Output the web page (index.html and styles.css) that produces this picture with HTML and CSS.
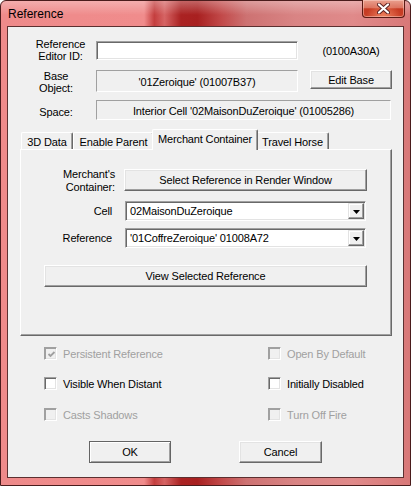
FILE: index.html
```html
<!DOCTYPE html>
<html>
<head>
<meta charset="utf-8">
<title>Reference</title>
<link rel="stylesheet" href="styles.css">
</head>
<body>
<div class="window">
  <div class="titlebar">
    <span class="title">Reference</span>
    <div class="close">
      <svg width="13" height="11" viewBox="0 0 13 11"><path d="M2 1.5 L11 9.5 M11 1.5 L2 9.5" stroke="#5a2020" stroke-width="4" stroke-linecap="round"/><path d="M2 1.5 L11 9.5 M11 1.5 L2 9.5" stroke="#ffffff" stroke-width="2.2" stroke-linecap="round"/></svg>
    </div>
  </div>
  <div class="client">
    <div class="row row1">
      <div class="lbl">Reference<br>Editor ID:</div>
      <div class="edit"></div>
      <div class="third">(0100A30A)</div>
    </div>
    <div class="row row2">
      <div class="lbl lbl-b">Base<br>Object:</div>
      <div class="static">'01Zeroique' (01007B37)</div>
      <div class="btn btn-edit">Edit Base</div>
    </div>
    <div class="row row3">
      <div class="lbl lbl-b">Space:</div>
      <div class="static static-wide">Interior Cell '02MaisonDuZeroique' (01005286)</div>
    </div>

    <div class="tabs">
      <div class="tab t1">3D Data</div>
      <div class="tab t2">Enable Parent</div>
      <div class="tab t3 sel">Merchant Container</div>
      <div class="tab t4">Travel Horse</div>
    </div>
    <div class="panel">
      <div class="prow prow-m">
        <div class="plbl plbl-m">Merchant's<br>Container:</div>
        <div class="btn btn-select">Select Reference in Render Window</div>
      </div>
      <div class="prow prow-c">
        <div class="plbl">Cell</div>
        <div class="combo"><span class="ctext">02MaisonDuZeroique</span><span class="arrow"><svg width="7" height="4" viewBox="0 0 7 4"><path d="M0 0 H7 L3.5 4 Z" fill="#000"/></svg></span></div>
      </div>
      <div class="prow prow-r">
        <div class="plbl">Reference</div>
        <div class="combo"><span class="ctext">'01CoffreZeroique' 01008A72</span><span class="arrow"><svg width="7" height="4" viewBox="0 0 7 4"><path d="M0 0 H7 L3.5 4 Z" fill="#000"/></svg></span></div>
      </div>
      <div class="btn btn-view">View Selected Reference</div>
    </div>

    <div class="checks">
      <label class="chk dis"><span class="box"><svg width="9" height="9" viewBox="0 0 9 9"><path d="M1.5 4 L3.5 6 L7.5 2" fill="none" stroke="#a0a0a0" stroke-width="1.8"/></svg></span>Persistent Reference</label>
      <label class="chk dis"><span class="box"></span>Open By Default</label>
      <label class="chk"><span class="box"></span>Visible When Distant</label>
      <label class="chk"><span class="box"></span>Initially Disabled</label>
      <label class="chk dis"><span class="box"></span>Casts Shadows</label>
      <label class="chk dis"><span class="box"></span>Turn Off Fire</label>
    </div>

    <div class="actions">
      <div class="btn btn-ok">OK</div>
      <div class="btn btn-cancel">Cancel</div>
    </div>
  </div>
</div>
</body>
</html>
```
FILE: styles.css
```css
html, body {
  margin: 0;
  padding: 0;
  background: #ffffff;
}
body {
  font-family: "Liberation Sans", Arial, sans-serif;
  font-size: 11px;
  letter-spacing: -0.15px;
  color: #000;
}
.window {
  box-sizing: border-box;
  width: 411px;
  height: 486px;
  border: 1px solid #4a1c1c;
  border-radius: 6px 6px 0 0;
  padding: 0 6px 7px 6px;
  display: flex;
  flex-direction: column;
  background:
    linear-gradient(180deg, rgba(255,255,255,0.3) 0, rgba(255,255,255,0) 14px),
    linear-gradient(90deg, #ee8a8a 0, #f08c8c 35%, #c43e3e 37.5%, #d66464 40%, #aa2222 44%, #a82020 48%, #c24a4a 54%, #cd7272 60%, #d98484 72%, #e08a8a 86%, #d87878 100%);
}
.titlebar {
  height: 25px;
  display: flex;
  justify-content: space-between;
  align-items: center;
}
.title {
  font-size: 12px;
  letter-spacing: 0;
  padding-left: 1px;
  color: #000;
}
.close {
  align-self: flex-start;
  margin-top: -1px;
  margin-right: -1px;
  width: 43px;
  height: 18px;
  box-sizing: border-box;
  border: 1px solid #5a1a14;
  border-top: none;
  border-radius: 0 0 4px 4px;
  background:
    radial-gradient(ellipse at 50% 100%, rgba(255,160,120,0.7) 0, rgba(255,120,90,0) 60%),
    linear-gradient(180deg, #eaa08e 0, #dc7460 45%, #c63a22 52%, #c84028 100%);
  box-shadow: inset 0 0 0 1px rgba(255,220,210,0.45);
  display: flex;
  align-items: center;
  justify-content: center;
}
.client {
  box-sizing: border-box;
  width: 397px;
  height: 452px;
  border: 1px solid #5c3030;
  background: #f0f0f0;
  display: flex;
  flex-direction: column;
}

/* top rows */
.row {
  display: flex;
  padding-left: 17px;
}
.row1 { margin-top: 14px; height: 19px; align-items: center; }
.row2 { margin-top: 10px; height: 22px; align-items: flex-start; }
.row3 { margin-top: 8px; height: 20px; align-items: center; }
.lbl {
  width: 71px;
  flex: none;
  text-align: center;
  line-height: 12px;
  margin-top: -2px;
}
.row2 .lbl { align-self: center; margin-top: 1px; }
.lbl-b { padding-right: 9px; box-sizing: border-box; }
.row3 .lbl { margin-top: 3px; }
.edit {
  box-sizing: border-box;
  width: 202px;
  height: 19px;
  background: #fff;
  border: 1px solid;
  border-color: #a0a0a0 #fff #fff #a0a0a0;
  box-shadow: inset 1px 1px 0 #696969, inset -1px -1px 0 #e3e3e3;
}
.third {
  margin-left: 12px;
  width: 82px;
  text-align: center;
}
.static {
  box-sizing: border-box;
  width: 202px;
  height: 22px;
  border: 1px solid;
  border-color: #a0a0a0 #fff #fff #a0a0a0;
  display: flex;
  align-items: center;
  justify-content: center;
  padding-top: 1px;
  white-space: nowrap;
}
.static-wide {
  width: 295px;
  height: 20px;
}
.btn {
  box-sizing: border-box;
  background: #f0f0f0;
  border: 1px solid;
  border-color: #fff #696969 #696969 #fff;
  box-shadow: inset -1px -1px 0 #a0a0a0, inset 1px 1px 0 #e3e3e3;
  display: flex;
  align-items: center;
  justify-content: center;
  white-space: nowrap;
}
.btn-edit {
  margin-left: 12px;
  width: 82px;
  height: 19px;
}

/* tabs */
.tabs {
  margin-top: 9px;
  margin-left: 12px;
  padding-left: 1px;
  height: 20px;
  display: flex;
  align-items: flex-end;
}
.tab {
  box-sizing: border-box;
  height: 17px;
  border: 1px solid;
  border-color: #fff #696969 transparent #fff;
  border-bottom: none;
  border-radius: 2px 2px 0 0;
  box-shadow: inset -1px 0 0 #a0a0a0;
  background: #f0f0f0;
  display: flex;
  align-items: center;
  justify-content: center;
  white-space: nowrap;
  padding-top: 1px;
}
.t1 { width: 52px; }
.t2 { width: 81px; }
.t3 { width: 106px; }
.t4 { width: 73px; }
.tab.sel {
  height: 21px;
  margin: 0 -2px -1px -2px;
  position: relative;
  z-index: 1;
  padding-top: 0;
  padding-bottom: 3px;
}
.panel {
  box-sizing: border-box;
  margin-left: 12px;
  width: 372px;
  height: 187px;
  border: 1px solid;
  border-color: #fff #696969 #696969 #fff;
  box-shadow: inset -1px -1px 0 #a0a0a0;
  padding-top: 19px;
  display: flex;
  flex-direction: column;
}
.prow {
  display: flex;
  align-items: center;
}
.prow-m { height: 22px; }
.prow-c { margin-top: 10px; height: 20px; }
.prow-r { margin-top: 7px; height: 20px; }
.plbl {
  width: 91px;
  flex: none;
  text-align: right;
  margin-right: 13px;
}
.plbl-m {
  width: 94px;
  margin-right: 9px;
  line-height: 13px;
  margin-top: 1px;
}
.btn-select {
  width: 243px;
  height: 22px;
}
.combo {
  box-sizing: border-box;
  width: 241px;
  height: 20px;
  background: #fff;
  border: 1px solid;
  border-color: #a0a0a0 #fff #fff #a0a0a0;
  box-shadow: inset 1px 1px 0 #696969, inset -1px -1px 0 #e3e3e3;
  padding: 1px;
  display: flex;
  align-items: center;
}
.ctext {
  flex: 1;
  padding-left: 3px;
  white-space: nowrap;
}
.arrow {
  box-sizing: border-box;
  width: 16px;
  height: 16px;
  background: #f0f0f0;
  border: 1px solid;
  border-color: #e3e3e3 #696969 #696969 #e3e3e3;
  box-shadow: inset -1px -1px 0 #a0a0a0, inset 1px 1px 0 #fff;
  display: flex;
  align-items: center;
  justify-content: center;
  padding-top: 1px;
}
.btn-view {
  margin-top: 17px;
  margin-left: 23px;
  width: 323px;
  height: 22px;
}

/* checkboxes */
.checks {
  margin-top: 11px;
  padding-left: 36px;
  display: grid;
  grid-template-columns: 224px 1fr;
  grid-template-rows: 30px 31px 13px;
  align-items: start;
}
.chk {
  display: flex;
  align-items: center;
  height: 13px;
  white-space: nowrap;
}
.box {
  box-sizing: border-box;
  width: 13px;
  height: 13px;
  margin-right: 6px;
  background: #fff;
  border: 1px solid;
  border-color: #a0a0a0 #fff #fff #a0a0a0;
  box-shadow: inset 1px 1px 0 #696969, inset -1px -1px 0 #e3e3e3;
  display: flex;
  align-items: center;
  justify-content: center;
  padding: 1px 0 0 1px;
}
.chk.dis { color: #a0a0a0; }
.chk.dis .box {
  background: #f0f0f0;
  box-shadow: inset 1px 1px 0 #a0a0a0, inset -1px -1px 0 #e3e3e3;
}

/* actions */
.actions {
  margin-top: 20px;
  padding-left: 81px;
  display: flex;
  gap: 68px;
}
.btn-ok {
  width: 82px;
  height: 22px;
  border-color: #646464;
  box-shadow: inset 1px 1px 0 #fff, inset -1px -1px 0 #a0a0a0;
}
.btn-cancel {
  width: 83px;
  height: 22px;
}
```
